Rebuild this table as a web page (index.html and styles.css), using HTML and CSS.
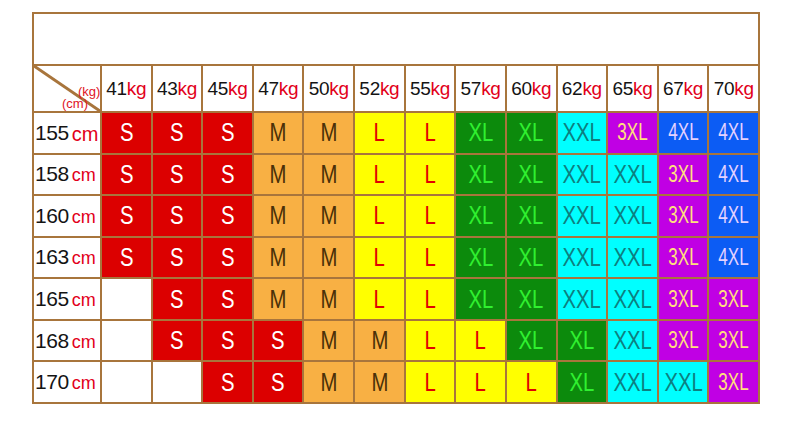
FILE: index.html
```html
<!DOCTYPE html>
<html>
<head>
<meta charset="utf-8">
<link rel="stylesheet" href="styles.css">
</head>
<body>
<div class="chart">
  <div class="title"></div>
  <div class="corner">
    <svg class="diag" viewBox="0 0 100 100" preserveAspectRatio="none"><line x1="0" y1="0" x2="100" y2="100" stroke="#a8753c" stroke-width="3" vector-effect="non-scaling-stroke"/></svg>
    <span class="u-kg">(kg)</span>
    <span class="u-cm">(cm)</span>
  </div>
  <div class="hd">41<em>kg</em></div>
  <div class="hd">43<em>kg</em></div>
  <div class="hd">45<em>kg</em></div>
  <div class="hd">47<em>kg</em></div>
  <div class="hd">50<em>kg</em></div>
  <div class="hd">52<em>kg</em></div>
  <div class="hd">55<em>kg</em></div>
  <div class="hd">57<em>kg</em></div>
  <div class="hd">60<em>kg</em></div>
  <div class="hd">62<em>kg</em></div>
  <div class="hd">65<em>kg</em></div>
  <div class="hd">67<em>kg</em></div>
  <div class="hd">70<em>kg</em></div>

  <div class="rl">155<em class="big">cm</em></div>
  <div class="c s"><span>S</span></div><div class="c s"><span>S</span></div><div class="c s"><span>S</span></div>
  <div class="c m"><span>M</span></div><div class="c m"><span>M</span></div>
  <div class="c l"><span>L</span></div><div class="c l"><span>L</span></div>
  <div class="c xl"><span>XL</span></div><div class="c xl"><span>XL</span></div>
  <div class="c xxl"><span>XXL</span></div>
  <div class="c x3"><span>3XL</span></div>
  <div class="c x4"><span>4XL</span></div><div class="c x4"><span>4XL</span></div>

  <div class="rl">158<em>cm</em></div>
  <div class="c s"><span>S</span></div><div class="c s"><span>S</span></div><div class="c s"><span>S</span></div>
  <div class="c m"><span>M</span></div><div class="c m"><span>M</span></div>
  <div class="c l"><span>L</span></div><div class="c l"><span>L</span></div>
  <div class="c xl"><span>XL</span></div><div class="c xl"><span>XL</span></div>
  <div class="c xxl"><span>XXL</span></div><div class="c xxl"><span>XXL</span></div>
  <div class="c x3"><span>3XL</span></div>
  <div class="c x4"><span>4XL</span></div>

  <div class="rl">160<em>cm</em></div>
  <div class="c s"><span>S</span></div><div class="c s"><span>S</span></div><div class="c s"><span>S</span></div>
  <div class="c m"><span>M</span></div><div class="c m"><span>M</span></div>
  <div class="c l"><span>L</span></div><div class="c l"><span>L</span></div>
  <div class="c xl"><span>XL</span></div><div class="c xl"><span>XL</span></div>
  <div class="c xxl"><span>XXL</span></div><div class="c xxl"><span>XXL</span></div>
  <div class="c x3"><span>3XL</span></div>
  <div class="c x4"><span>4XL</span></div>

  <div class="rl">163<em>cm</em></div>
  <div class="c s"><span>S</span></div><div class="c s"><span>S</span></div><div class="c s"><span>S</span></div>
  <div class="c m"><span>M</span></div><div class="c m"><span>M</span></div>
  <div class="c l"><span>L</span></div><div class="c l"><span>L</span></div>
  <div class="c xl"><span>XL</span></div><div class="c xl"><span>XL</span></div>
  <div class="c xxl"><span>XXL</span></div><div class="c xxl"><span>XXL</span></div>
  <div class="c x3"><span>3XL</span></div>
  <div class="c x4"><span>4XL</span></div>

  <div class="rl">165<em>cm</em></div>
  <div class="c"></div>
  <div class="c s"><span>S</span></div><div class="c s"><span>S</span></div>
  <div class="c m"><span>M</span></div><div class="c m"><span>M</span></div>
  <div class="c l"><span>L</span></div><div class="c l"><span>L</span></div>
  <div class="c xl"><span>XL</span></div><div class="c xl"><span>XL</span></div>
  <div class="c xxl"><span>XXL</span></div><div class="c xxl"><span>XXL</span></div>
  <div class="c x3"><span>3XL</span></div><div class="c x3"><span>3XL</span></div>

  <div class="rl">168<em>cm</em></div>
  <div class="c"></div>
  <div class="c s"><span>S</span></div><div class="c s"><span>S</span></div><div class="c s"><span>S</span></div>
  <div class="c m"><span>M</span></div><div class="c m"><span>M</span></div>
  <div class="c l"><span>L</span></div><div class="c l"><span>L</span></div>
  <div class="c xl"><span>XL</span></div><div class="c xl"><span>XL</span></div>
  <div class="c xxl"><span>XXL</span></div>
  <div class="c x3"><span>3XL</span></div><div class="c x3"><span>3XL</span></div>

  <div class="rl">170<em>cm</em></div>
  <div class="c"></div><div class="c"></div>
  <div class="c s"><span>S</span></div><div class="c s"><span>S</span></div>
  <div class="c m"><span>M</span></div><div class="c m"><span>M</span></div>
  <div class="c l"><span>L</span></div><div class="c l"><span>L</span></div><div class="c l"><span>L</span></div>
  <div class="c xl"><span>XL</span></div>
  <div class="c xxl"><span>XXL</span></div><div class="c xxl"><span>XXL</span></div>
  <div class="c x3"><span>3XL</span></div>
</div>
</body>
</html>
```

FILE: styles.css
```css
html, body {
  margin: 0;
  padding: 0;
  background: #ffffff;
}
body {
  font-family: "Liberation Sans", Arial, sans-serif;
  padding: 12px 0 0 32px;
}
.chart {
  box-sizing: border-box;
  width: 728px;
  height: 392px;
  display: grid;
  grid-template-columns: 66px repeat(13, 1fr);
  grid-template-rows: 50px 45px repeat(7, 1fr);
  gap: 2px;
  padding: 2px;
  background: #a8753c;
}
.chart > div {
  background: #ffffff;
  overflow: hidden;
}
.title {
  grid-column: 1 / -1;
}
.corner {
  position: relative;
}
.diag {
  position: absolute;
  left: 0;
  top: 0;
  width: 100%;
  height: 100%;
}
.u-kg, .u-cm {
  position: absolute;
  font-size: 13px;
  color: #e0141e;
  line-height: 1;
}
.u-kg { left: 44px; top: 19px; }
.u-cm { left: 28px; top: 31px; }
.hd {
  display: flex;
  align-items: center;
  justify-content: center;
  font-size: 19px;
  color: #141414;
  white-space: nowrap;
  letter-spacing: -0.3px;
}
em {
  font-style: normal;
  color: #e2001a;
}
.rl {
  display: flex;
  align-items: center;
  padding-left: 1px;
  font-size: 21px;
  color: #141414;
  white-space: nowrap;
  letter-spacing: -0.4px;
}
.rl em {
  font-size: 18px;
  margin-left: 3px;
  margin-top: 3px;
  letter-spacing: 0;
}
.rl em.big {
  font-size: 20px;
  margin-top: 4px;
}
.c {
  display: flex;
  align-items: center;
  justify-content: center;
  font-size: 26px;
  white-space: nowrap;
}
.c span {
  display: inline-block;
  transform: scaleX(0.78);
}
.chart > .s { background: #dc0000; color: #ffffff; }
.chart > .m { background: #f8b044; color: #4a3008; }
.chart > .l { background: #ffff00; color: #e00000; }
.chart > .xl { background: #0c8a0c; color: #30f030; }
.chart > .xxl { background: #00ffff; color: #0d7f80; }
.chart > .x3 { background: #c000e4; color: #ffe07c; font-size: 23px; }
.chart > .x4 { background: #0c5cf4; color: #e4d2ff; font-size: 23px; }
.x3 span, .x4 span { transform: scaleX(0.74); }
```
